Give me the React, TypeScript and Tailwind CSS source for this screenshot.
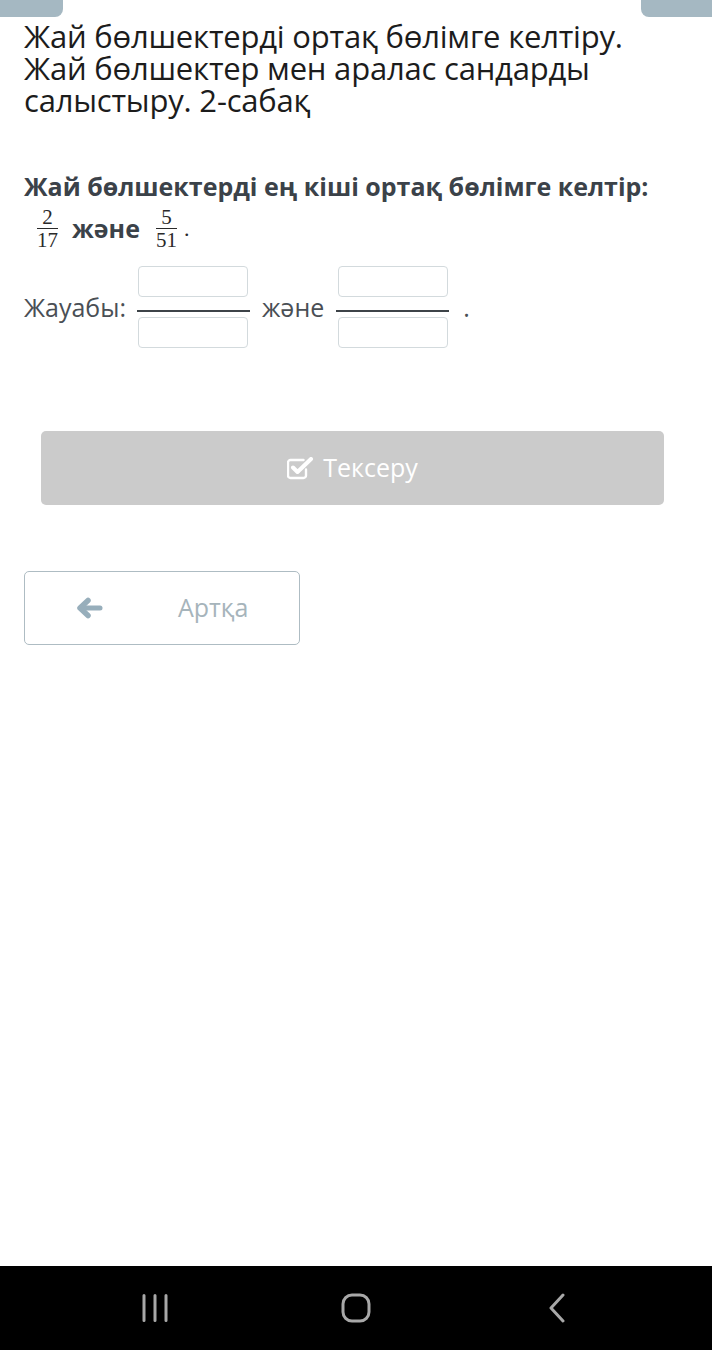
import React from "react";

const sans = { fontFamily: '"Open Sans", "Noto Sans", sans-serif' };

function CheckSquare() {
  return (
    <svg width="27" height="23" viewBox="0 0 27 23" fill="none">
      <path
        d="M19 12.5v6a2.5 2.5 0 0 1-2.5 2.5h-13A2.5 2.5 0 0 1 1 18.5v-13A2.5 2.5 0 0 1 3.5 3h13"
        stroke="white"
        strokeWidth="2.4"
        strokeLinecap="round"
      />
      <path d="M6 10.5l4.5 4.5L24 2" stroke="white" strokeWidth="4" strokeLinecap="round" strokeLinejoin="round" />
    </svg>
  );
}

function ArrowLeft() {
  return (
    <svg width="27" height="22" viewBox="0 0 27 22" fill="none">
      <path d="M24 11H5" stroke="#97aebb" strokeWidth="5" strokeLinecap="round" />
      <path d="M12 3.5L4 11l8 7.5" stroke="#97aebb" strokeWidth="5.5" strokeLinecap="round" strokeLinejoin="round" />
    </svg>
  );
}

function Frac({ top, bottom }: { top: string; bottom: string }) {
  return (
    <span className="inline-flex flex-col items-center px-[3px] font-['Liberation_Serif','DejaVu_Serif',serif] text-[21px] font-normal leading-[22px] text-[#2a2a2a]">
      <span>{top}</span>
      <span className="h-[1px] w-full bg-[#2a2a2a]"></span>
      <span>{bottom}</span>
    </span>
  );
}

function AnswerFrac() {
  return (
    <div className="flex w-[113px] flex-col items-center">
      <div className="h-[31px] w-[110px] rounded-[4px] border border-[#d3dadd] bg-white"></div>
      <div className="mt-[13px] h-[2px] w-[113px] bg-[#3d4348]"></div>
      <div className="mt-[5px] h-[31px] w-[110px] rounded-[4px] border border-[#d3dadd] bg-white"></div>
    </div>
  );
}

export default function App() {
  return (
    <div className="relative flex h-[1350px] w-[712px] flex-col bg-white" style={sans}>
      <div className="absolute left-0 top-0 h-[17px] w-[63px] rounded-br-[8px] bg-[#a5b8c2]"></div>
      <div className="absolute right-0 top-0 h-[17px] w-[71px] rounded-bl-[8px] bg-[#a5b8c2]"></div>

      <div className="flex-1 px-6 pt-5">
        <h1 className="text-[31px] font-normal leading-[32px] tracking-[-0.2px] text-[#1c1c1c]">
          Жай бөлшектерді ортақ бөлімге келтіру.
          <br />
          Жай бөлшектер мен аралас сандарды
          <br />
          салыстыру. 2-сабақ
        </h1>

        <p className="mt-[55px] whitespace-nowrap text-[25px] font-bold leading-[30px] text-[#3b4249]">
          Жай бөлшектерді ең кіші ортақ бөлімге келтір:
        </p>
        <div className="mt-[5px] flex items-center pl-[10px] text-[25px] font-bold text-[#3b4249]">
          <Frac top="2" bottom="17" />
          <span className="ml-[11px] mr-[13px]">және</span>
          <Frac top="5" bottom="51" />
          <span className="ml-[4px] font-['Liberation_Serif',serif] text-[22px] font-normal text-[#2a2a2a]">.</span>
        </div>

        <div className="mt-[15px] flex items-center text-[25px] text-[#4a4f55]">
          <span className="mr-[11px] mt-[2px]">Жауабы:</span>
          <AnswerFrac />
          <span className="ml-[12px] mr-[12px] mt-[2px]">және</span>
          <AnswerFrac />
          <span className="ml-[14px] mt-[2px]">.</span>
        </div>

        <button className="ml-[17px] mt-[83px] flex h-[74px] w-[623px] items-center justify-center gap-[9px] rounded-[5px] bg-[#cbcbcb] text-[25px] text-white">
          <CheckSquare />
          <span>Тексеру</span>
        </button>

        <button className="mt-[66px] flex h-[74px] w-[276px] items-center rounded-[5px] border border-[#aebcc3] bg-white text-[25px] text-[#a6b4bb]">
          <span className="ml-[51px]">
            <ArrowLeft />
          </span>
          <span className="ml-[75px]">Артқа</span>
        </button>
      </div>

      <div className="flex h-[84px] items-center bg-black">
        <div className="mx-auto grid w-[603px] grid-cols-3 place-items-center">
          <svg width="28" height="28" viewBox="0 0 28 28">
            <path d="M3 1.5v25M14 1.5v25M25 1.5v25" stroke="#a8a8a8" strokeWidth="3" strokeLinecap="round" />
          </svg>
          <svg width="30" height="30" viewBox="0 0 30 30">
            <rect x="2" y="2" width="26" height="26" rx="9" stroke="#a8a8a8" strokeWidth="3" fill="none" />
          </svg>
          <svg width="18" height="30" viewBox="0 0 18 30">
            <path d="M15 2L3 15l12 13" stroke="#a8a8a8" strokeWidth="3" fill="none" strokeLinecap="round" strokeLinejoin="round" />
          </svg>
        </div>
      </div>
    </div>
  );
}
